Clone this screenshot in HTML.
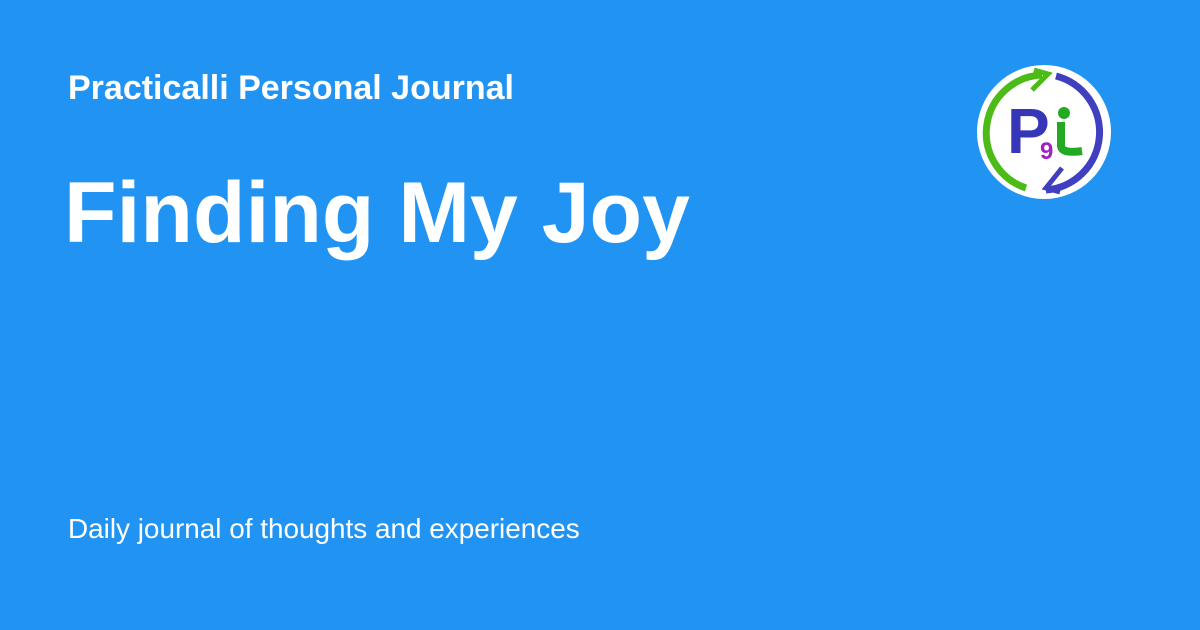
<!DOCTYPE html>
<html><head><style>
body{margin:0;width:1200px;height:630px;background:#2194f3;font-family:"Liberation Sans",sans-serif;color:#fff;position:relative;overflow:hidden}
.a{position:absolute;left:68px;top:69px;font-size:34px;font-weight:bold}
.b{position:absolute;left:64px;top:164px;font-size:86px;font-weight:bold}
.c{position:absolute;left:68px;top:513px;font-size:27.9px}
svg{position:absolute;left:976px;top:64px}
</style></head><body>
<div class="a">Practicalli Personal Journal</div>
<div class="b">Finding My Joy</div>
<div class="c">Daily journal of thoughts and experiences</div>
<svg width="136" height="136" viewBox="0 0 136 136">
<circle cx="68" cy="68" r="67" fill="#fff"/>
<path d="M50 124 A58 58 0 0 1 66 11" fill="none" stroke="#4cbb17" stroke-width="7"/>
<path d="M56 26 L72 10 L58 6" fill="none" stroke="#4cbb17" stroke-width="5"/>
<path d="M80 12 A58 58 0 0 1 70 126" fill="none" stroke="#3f3fc0" stroke-width="7"/>
<path d="M86 104 L70 124 L84 128" fill="none" stroke="#3f3fc0" stroke-width="5"/>
<text x="31" y="89" font-family="Liberation Sans" font-weight="bold" font-size="64" fill="#3636b8">P</text>
<text x="64" y="95" font-family="Liberation Sans" font-weight="bold" font-size="24" fill="#a020c0">9</text>
<circle cx="88" cy="49" r="6" fill="#22aa22"/>
<path d="M85 58 L85 82 Q86 90 106 87" fill="none" stroke="#22aa22" stroke-width="8"/>
</svg>
</body></html>
